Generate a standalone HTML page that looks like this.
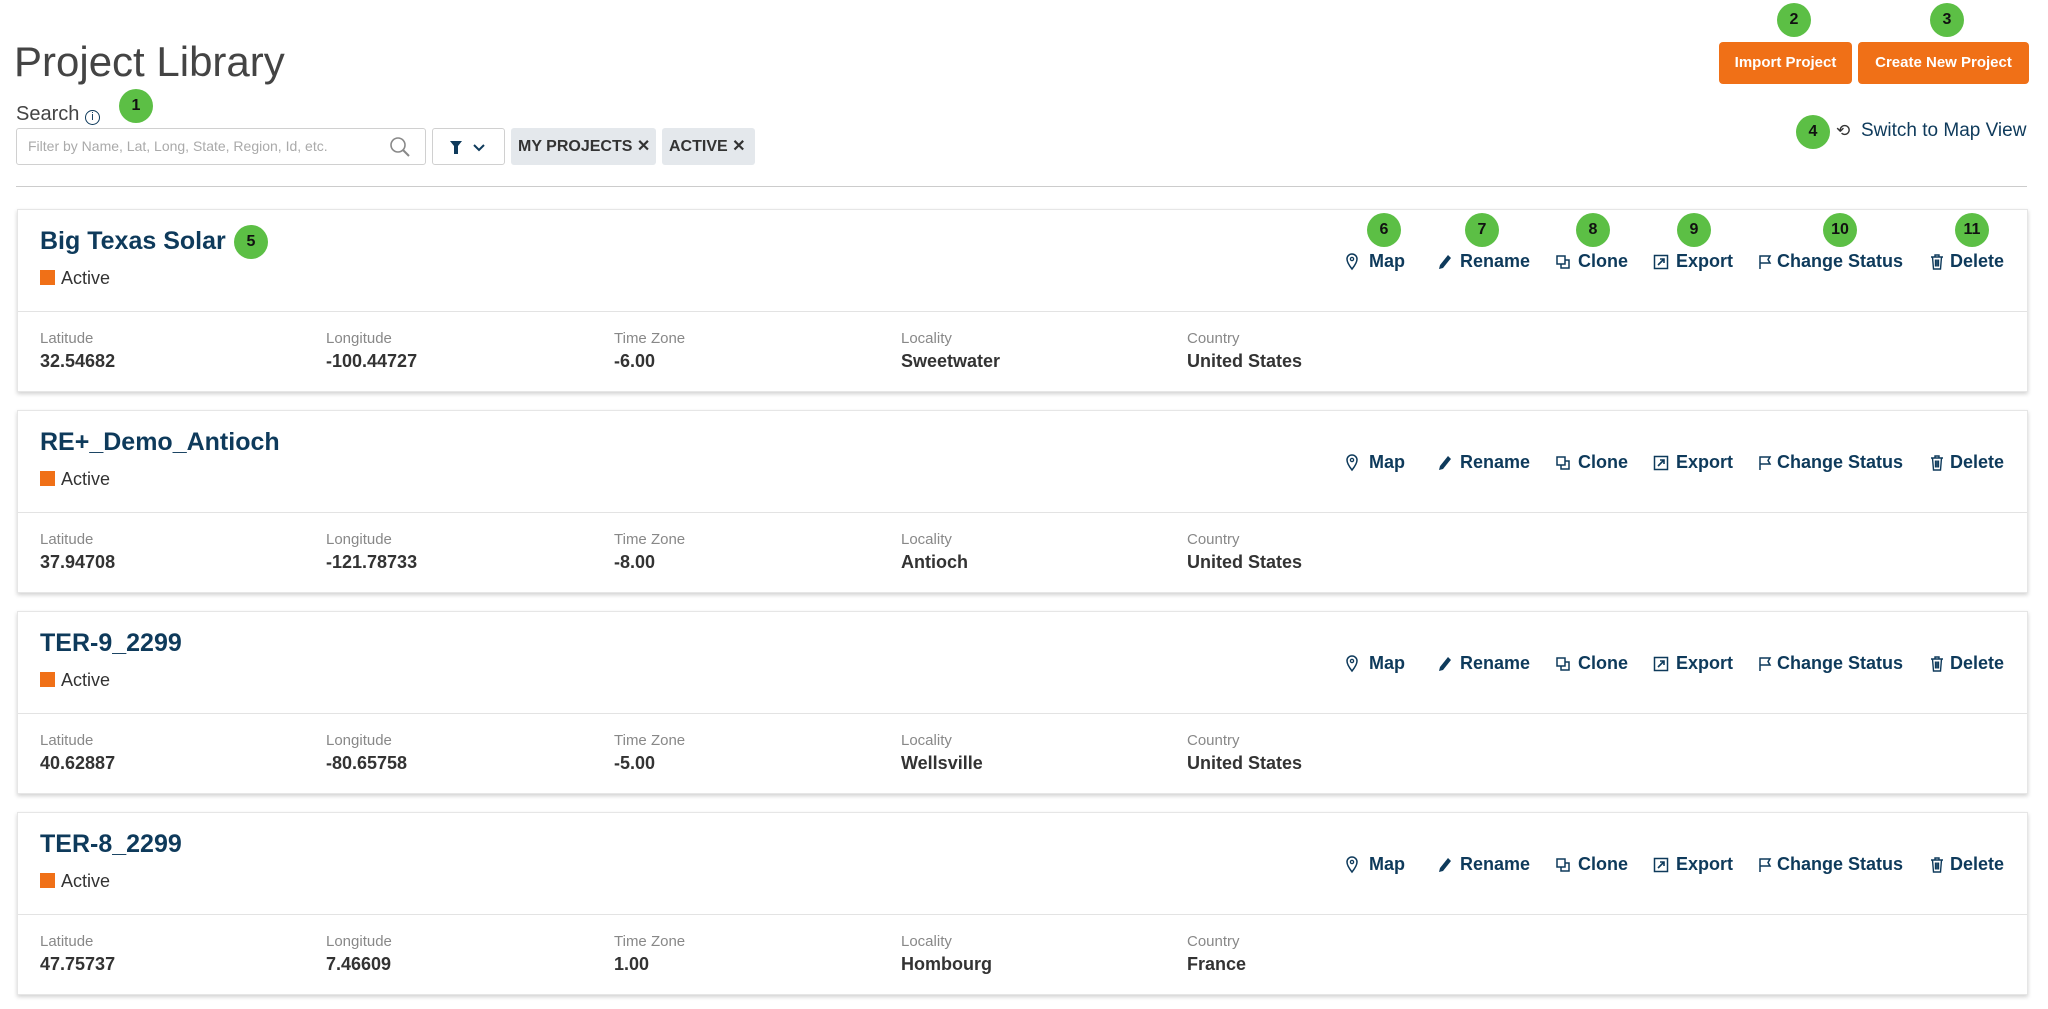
<!DOCTYPE html>
<html><head><meta charset="utf-8"><style>
*{margin:0;padding:0;box-sizing:border-box}
body{width:2048px;height:1009px;background:#fff;font-family:"Liberation Sans",Arial,sans-serif;position:relative;overflow:hidden;color:#333}
.a{position:absolute;white-space:nowrap}
.badge{position:absolute;width:34px;height:34px;border-radius:50%;background:#5cbf45;color:#111;font-weight:bold;font-size:16px;text-align:center;line-height:34px}
.card{position:absolute;left:17px;width:2011px;height:183px;background:#fff;border:1px solid #e6e6e6;box-shadow:0 2px 4px rgba(0,0,0,.18)}
.card .t{position:absolute;left:22px;top:17px;font-size:25px;color:#0e3a5b;font-weight:600;white-space:nowrap}
.card .st{position:absolute;left:22px;top:58px;font-size:18px;color:#333}
.card .st i{display:inline-block;width:15px;height:15px;background:#f07017;margin-right:6px;vertical-align:-1px}
.card .dv{position:absolute;left:0;right:0;top:101px;border-top:1px solid #e3e3e3}
.lab{position:absolute;top:120px;font-size:15px;color:#888;white-space:nowrap}
.val{position:absolute;top:141px;font-size:18px;color:#333;font-weight:600;white-space:nowrap}
.act{position:absolute;top:41px;font-size:18px;color:#0e3a5b;font-weight:600;white-space:nowrap}
.act svg{position:absolute;top:2px}
.act span{position:absolute;white-space:nowrap}
</style></head><body>
<div class="a" style="left:14px;top:38px;font-size:42px;color:#444;font-weight:300">Project Library</div>
<div class="a" style="left:16px;top:103px;font-size:20px;color:#444">Search <span style="display:inline-block;width:15px;height:15px;border:1.6px solid #0e3a5b;border-radius:50%;font-size:11px;line-height:12px;text-align:center;color:#0e3a5b;vertical-align:0">i</span></div>
<div class="badge" style="left:119px;top:89px">1</div>
<div class="a" style="left:16px;top:128px;width:410px;height:37px;border:1px solid #d0d0d0;border-radius:3px;font-size:14px;color:#aaa;line-height:35px;padding-left:11px">Filter by Name, Lat, Long, State, Region, Id, etc.
<svg style="position:absolute;right:14px;top:7px" width="22" height="22" viewBox="0 0 22 22"><circle cx="9" cy="9" r="7" fill="none" stroke="#888" stroke-width="1.6"/><path d="M14 14l6 6" stroke="#888" stroke-width="2"/></svg></div>
<div class="a" style="left:432px;top:128px;width:73px;height:37px;border:1px solid #d0d0d0;border-radius:3px">
<svg style="position:absolute;left:17px;top:12px" width="40" height="14" viewBox="0 0 40 14"><path d="M0 0h12l-4 5v8h-4V5z" fill="#0e3a5b"/><path d="M24 4l5 5 5-5" fill="none" stroke="#0e3a5b" stroke-width="2"/></svg></div>
<div class="a" style="left:511px;top:128px;width:145px;height:37px;background:#e4e8ec;border-radius:3px;font-size:16px;color:#333;line-height:37px;padding-left:7px;font-weight:600">MY PROJECTS ✕</div>
<div class="a" style="left:662px;top:128px;width:93px;height:37px;background:#e4e8ec;border-radius:3px;font-size:16px;color:#333;line-height:37px;padding-left:7px;font-weight:600">ACTIVE ✕</div>
<div class="a" style="left:1719px;top:42px;width:133px;height:42px;background:#f07017;border-radius:4px;color:#fff;font-size:15px;font-weight:bold;text-align:center;line-height:42px">Import Project</div>
<div class="a" style="left:1858px;top:42px;width:171px;height:42px;background:#f07017;border-radius:4px;color:#fff;font-size:15px;font-weight:bold;text-align:center;line-height:42px">Create New Project</div>
<div class="badge" style="left:1777px;top:3px">2</div>
<div class="badge" style="left:1930px;top:3px">3</div>
<div class="badge" style="left:1796px;top:115px">4</div>
<div class="a" style="left:1836px;top:121px;font-size:17px;color:#333">⟲</div>
<div class="a" style="left:1861px;top:120px;font-size:19px;color:#0e3a5b">Switch to Map View</div>
<div class="a" style="left:16px;top:186px;width:2011px;border-top:1px solid #ccc"></div>

<div class="card" style="top:209px"></div>
<div class="card" style="top:410px"></div>
<div class="card" style="top:611px"></div>
<div class="card" style="top:812px"></div>
<div class="badge" style="left:234px;top:225px">5</div>
<div class="badge" style="left:1367px;top:213px">6</div>
<div class="badge" style="left:1465px;top:213px">7</div>
<div class="badge" style="left:1576px;top:213px">8</div>
<div class="badge" style="left:1677px;top:213px">9</div>
<div class="badge" style="left:1823px;top:213px">10</div>
<div class="badge" style="left:1955px;top:213px">11</div>
<script>
var d=[["Big Texas Solar","32.54682","-100.44727","-6.00","Sweetwater","United States"],
["RE+_Demo_Antioch","37.94708","-121.78733","-8.00","Antioch","United States"],
["TER-9_2299","40.62887","-80.65758","-5.00","Wellsville","United States"],
["TER-8_2299","47.75737","7.46609","1.00","Hombourg","France"]];
var cards=document.querySelectorAll('.card');
var labs=["Latitude","Longitude","Time Zone","Locality","Country"],xs=[22,308,596,883,1169];
var icons={
map:'<svg width="14" height="18" viewBox="0 0 14 18"><path d="M7 16C3 11 2 8 2 6a5 5 0 0 1 10 0c0 2-1 5-5 10z" fill="none" stroke="#0e3a5b" stroke-width="1.5"/><circle cx="7" cy="6" r="1.6" fill="none" stroke="#0e3a5b" stroke-width="1.3"/></svg>',
ren:'<svg width="16" height="18" viewBox="0 0 16 18"><path d="M11 2l3 3-8 10-4 1 1-4z" fill="#0e3a5b"/></svg>',
clo:'<svg width="16" height="18" viewBox="0 0 16 18"><path d="M2 3h8v8H2zM6 11v4h8V7h-4" fill="none" stroke="#0e3a5b" stroke-width="1.5"/></svg>',
exp:'<svg width="16" height="18" viewBox="0 0 16 18"><rect x="1.5" y="2.5" width="13" height="13" fill="none" stroke="#0e3a5b" stroke-width="1.5"/><path d="M5 12l6-6M7 6h4v4" fill="none" stroke="#0e3a5b" stroke-width="1.6"/></svg>',
sta:'<svg width="14" height="18" viewBox="0 0 14 18"><path d="M2 16V3h10l-2 3.5 2 3.5H2" fill="none" stroke="#0e3a5b" stroke-width="1.5"/></svg>',
del:'<svg width="14" height="18" viewBox="0 0 14 18"><path d="M1 4h12M5 4V2h4v2M2.5 4l1 12h7l1-12M5.5 6.5v7M7 6.5v7M8.5 6.5v7" fill="none" stroke="#0e3a5b" stroke-width="1.4"/></svg>'};
var acts=[[1345,1369,'map','Map'],[1437,1460,'ren','Rename'],[1555,1578,'clo','Clone'],[1653,1676,'exp','Export'],[1758,1777,'sta','Change Status'],[1930,1950,'del','Delete']];
cards.forEach(function(c,i){var r=d[i],h='<div class="t">'+r[0]+'</div><div class="st"><i></i>Active</div><div class="dv"></div>';
for(var k=0;k<5;k++)h+='<div class="lab" style="left:'+xs[k]+'px">'+labs[k]+'</div><div class="val" style="left:'+xs[k]+'px">'+r[k+1]+'</div>';
acts.forEach(function(a){h+='<div class="act" style="left:'+(a[0]-18)+'px">'+icons[a[2]]+'<span style="left:'+(a[1]-a[0])+'px">'+a[3]+'</span></div>';});
c.innerHTML=h;});
</script>
</body></html>
